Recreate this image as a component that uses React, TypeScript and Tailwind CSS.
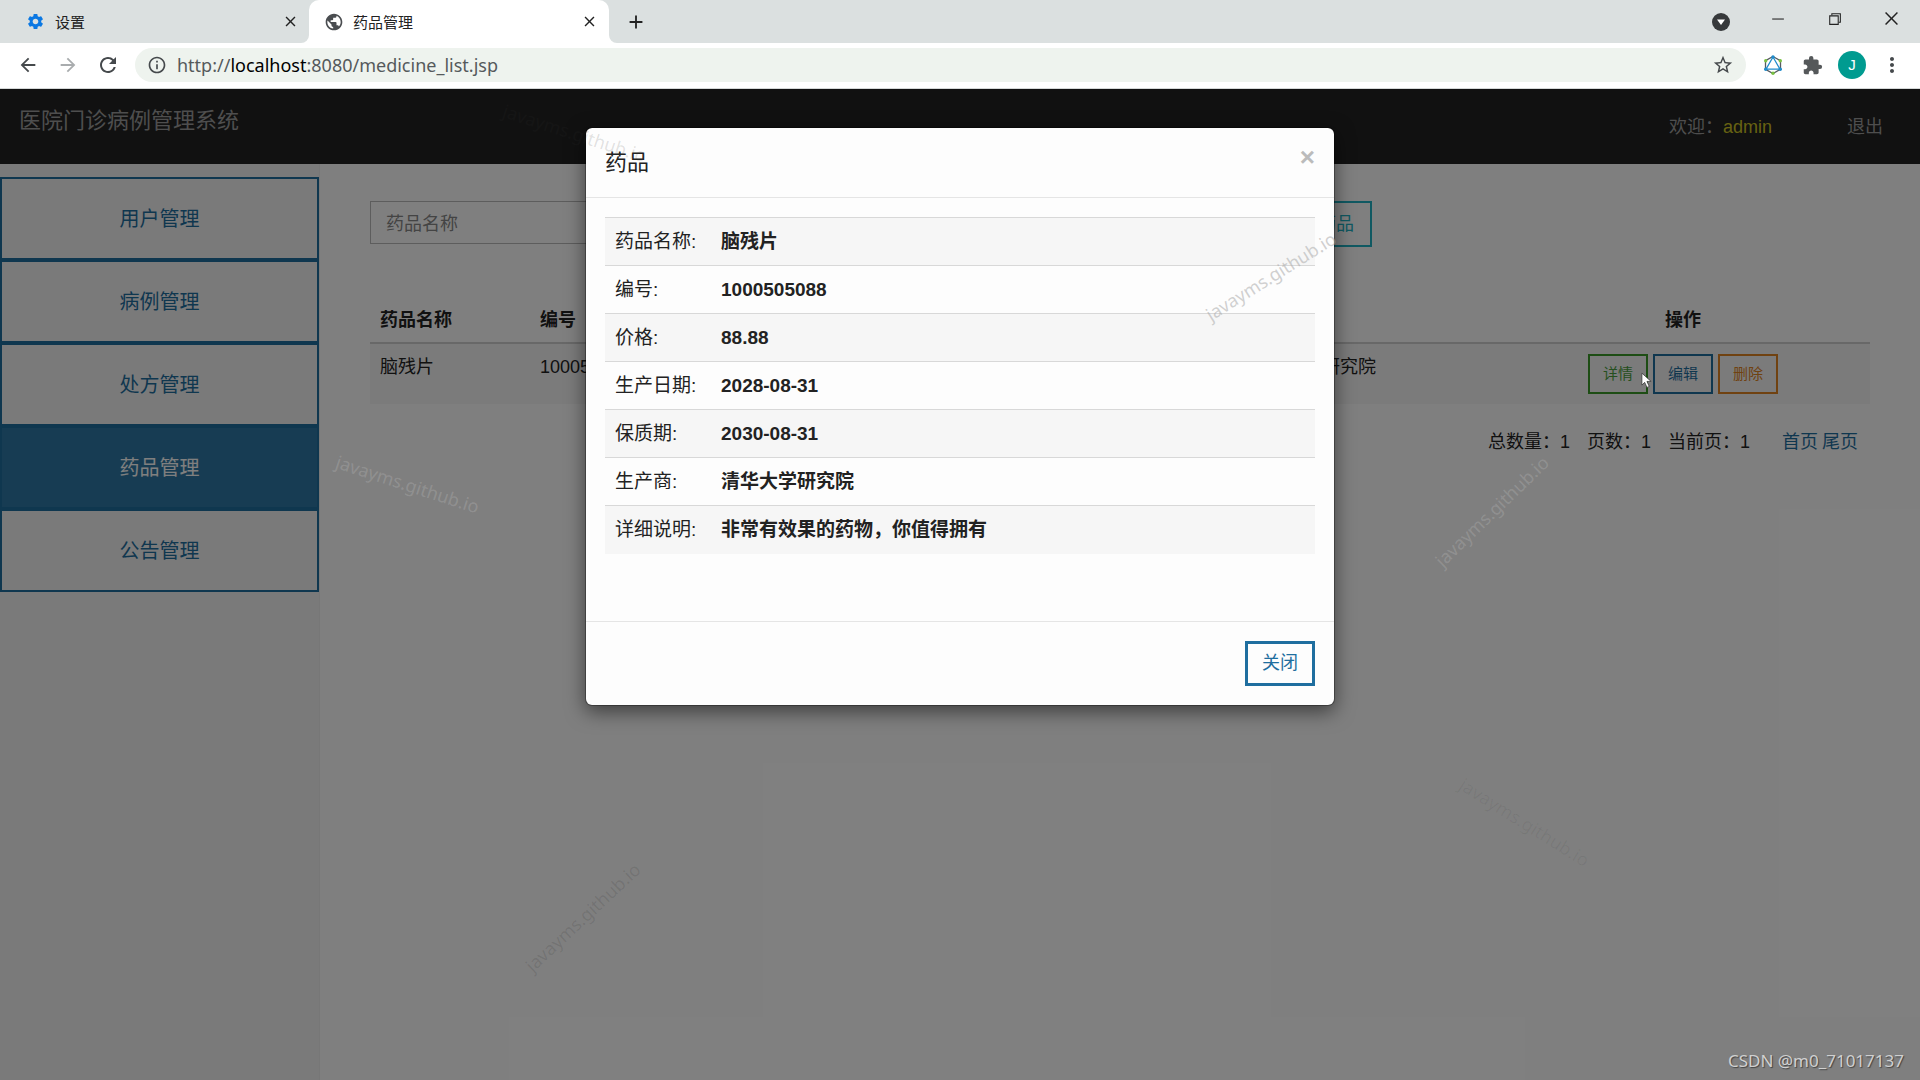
import {
    MdSettings, MdPublic, MdClose, MdAdd, MdArrowBack, MdArrowForward, MdRefresh,
    MdInfoOutline, MdStarBorder, MdExtension, MdMoreVert
} from "react-icons/md"
import { VscChromeMinimize, VscChromeRestore, VscChromeClose } from "react-icons/vsc"

const menu = ["用户管理", "病例管理", "处方管理", "药品管理", "公告管理"]

const details = [
    { label: "药品名称:", value: "脑残片" },
    { label: "编号:", value: "1000505088" },
    { label: "价格:", value: "88.88" },
    { label: "生产日期:", value: "2028-08-31" },
    { label: "保质期:", value: "2030-08-31" },
    { label: "生产商:", value: "清华大学研究院" },
    { label: "详细说明:", value: "非常有效果的药物，你值得拥有" },
]

const columns = [
    { title: "药品名称", width: "w-[160px]" },
    { title: "编号", width: "w-[180px]" },
    { title: "价格", width: "w-[150px]" },
    { title: "生产日期", width: "w-[190px]" },
    { title: "保质期", width: "w-[190px]" },
    { title: "生产商", width: "w-[256px]" },
]

const row = ["脑残片", "1000505088", "88.88", "2028-08-31", "2030-08-31", "清华大学研究院"]

const watermarks = [
    "left-[333px] top-[381px] rotate-[18deg] text-white/15",
    "left-[500px] top-[30px] rotate-[18deg] text-[#333333]/15",
    "left-[1196px] top-[173px] -rotate-[32deg] text-[#aaaaaa]/55",
    "left-[1417px] top-[408px] -rotate-[44deg] text-white/15",
    "left-[508px] top-[814px] -rotate-[43deg] text-black/10",
    "left-[1450px] top-[719px] rotate-[32deg] text-black/6",
]

function TabStrip() {
    return (
        <div className="flex h-[43px] items-end bg-white text-[15px] text-[#222222]">
            <div className="flex h-[43px] w-[309px] items-center rounded-br-[8px] bg-[#dbe0e0] pl-[26px] pr-[10px]">
                <MdSettings className="h-[19px] w-[19px] text-[#0b78e3]" />
                <span className="ml-[10px] flex-1 pt-[3px]">设置</span>
                <button type="button" aria-label="关闭标签页"><MdClose className="h-[17px] w-[17px]" /></button>
            </div>

            <div className="bg-[#dbe0e0]">
                <div className="flex h-[43px] w-[300px] items-center rounded-t-[10px] bg-white pl-[15px] pr-[11px]">
                    <MdPublic className="h-5 w-5 text-[#4a4d50]" />
                    <span className="ml-[9px] flex-1 pt-[3px]">药品管理</span>
                    <button type="button" aria-label="关闭标签页"><MdClose className="h-[17px] w-[17px]" /></button>
                </div>
            </div>

            <div className="flex h-[43px] flex-1 items-center rounded-bl-[8px] bg-[#dbe0e0]">
                <button type="button" aria-label="新标签页" className="flex w-[54px] justify-center">
                    <MdAdd className="h-[22px] w-[22px]" />
                </button>

                <button type="button" aria-label="搜索标签页" className="ml-auto flex w-[56px] justify-center">
                    <svg viewBox="0 0 18 18" className="h-[18px] w-[18px]">
                        <circle cx="9" cy="9" r="9" fill="#36393b" />
                        <path d="M5 6.5h8L9 12z" fill="#ffffff" />
                    </svg>
                </button>
                <button type="button" aria-label="最小化" className="flex w-[57px] justify-center pb-[7px]"><VscChromeMinimize className="h-[17px] w-[17px]" /></button>
                <button type="button" aria-label="还原" className="flex w-[57px] justify-center pb-[7px]"><VscChromeRestore className="h-[17px] w-[17px]" /></button>
                <button type="button" aria-label="关闭" className="flex w-[57px] justify-center pb-[7px]"><VscChromeClose className="h-[19px] w-[19px]" /></button>
            </div>
        </div>
    )
}

function Toolbar() {
    return (
        <div className="flex h-[46px] items-center border-b border-[#d5d8d8] bg-white pb-px pl-[17px] pr-[16px] text-[#45494c]">
            <button type="button" aria-label="后退"><MdArrowBack className="h-[22px] w-[22px]" /></button>
            <button type="button" aria-label="前进" className="ml-[18px]"><MdArrowForward className="h-[22px] w-[22px] text-[#a9acae]" /></button>
            <button type="button" aria-label="重新加载" className="ml-[17px]"><MdRefresh className="h-6 w-6" /></button>

            <div className="ml-[15px] mr-[14px] flex h-[34px] flex-1 items-center rounded-full bg-[#eef3ee] px-[12px]">
                <MdInfoOutline className="h-5 w-5 shrink-0" />
                <p className="ml-[10px] flex-1 font-['Noto_Sans'] text-[18px] leading-6 text-[#555a5c]">http://<span className="text-black">localhost</span>:8080/medicine_list.jsp</p>
                <button type="button" aria-label="收藏"><MdStarBorder className="h-[22px] w-[22px]" /></button>
            </div>

            <div className="flex items-center">
                <svg viewBox="0 0 20 20" className="mx-[3px] h-5 w-5">
                    <path d="M10 1.5l7.5 4.2v8.6L10 18.500l-7.500-4.200V5.700z" fill="none" stroke="#555b60" strokeWidth="1.300" />
                    <path d="M10 2L3 14.200h14z" fill="none" stroke="#1f8ccc" strokeWidth="1.300" />
                    <circle cx="10" cy="2" r="1.700" fill="#1f8ccc" />
                    <circle cx="2.700" cy="14.200" r="1.700" fill="#1f8ccc" />
                    <circle cx="17.300" cy="14.200" r="1.700" fill="#1f8ccc" />
                    <circle cx="2.700" cy="5.800" r="1.700" fill="#7ac143" />
                    <circle cx="17.300" cy="5.800" r="1.700" fill="#7ac143" />
                    <circle cx="10" cy="18.300" r="1.700" fill="#7ac143" />
                </svg>
                <button type="button" aria-label="扩展程序" className="ml-[16px]"><MdExtension className="h-[21px] w-[21px] text-[#55585a]" /></button>
                <button type="button" className="ml-[15px] h-7 w-7 rounded-full bg-[#009b90] text-[15px] leading-7 text-white">J</button>
                <button type="button" aria-label="更多" className="ml-[14px]"><MdMoreVert className="h-6 w-6" /></button>
            </div>
        </div>
    )
}

function Sidebar() {
    return (
        <aside className="w-[320px] shrink-0 border-r border-[#eeeeee] bg-[#f5f5f5] pt-[13px]">
            <nav className="flex flex-col">
                {menu.map((item) => (
                    <a
                        key={item}
                        href="#"
                        className={item === "药品管理"
                            ? "h-[83px] border-2 border-[#1f6e9f] bg-[#2f79a6] text-center text-[20px] leading-[81px] text-white"
                            : "h-[83px] border-2 border-[#1f6e9f] text-center text-[20px] leading-[81px] text-[#1f6e9f]"}
                    >
                        {item}
                    </a>
                ))}
            </nav>
        </aside>
    )
}

function MedicineList() {
    return (
        <main className="min-w-0 flex-1 px-[50px] pt-[37px]">
            <form className="flex h-[46px] items-start">
                <input type="text" aria-label="药品名称" placeholder="药品名称" className="h-[43px] w-[500px] border border-[#bbbbbb] px-[15px] pt-1 text-[18px] placeholder:text-[#888888]" />
                <button type="button" className="ml-[30px] h-[46px] w-[130px] border-2 border-[#1f6e9f] text-[18px] text-[#1f6e9f]">查询</button>
                <button type="button" className="ml-auto mr-[498px] h-[46px] border-2 border-[#20b2c4] px-[16px] text-[18px] text-[#20b2c4]">添加药品</button>
            </form>

            <table className="mt-[50px] w-full table-fixed text-left text-[18px] leading-[26px]">
                <thead>
                    <tr className="h-[46px] border-b-2 border-[#d0d0d0]">
                        {columns.map((column) => (
                            <th key={column.title} className={`${column.width} px-[10px]`}>{column.title}</th>
                        ))}
                        <th className="text-center">操作</th>
                    </tr>
                </thead>
                <tbody>
                    <tr className="bg-[#f7f7f7] align-top">
                        {row.map((cell, index) => (
                            <td key={index} className="px-[10px] pt-[10px]">{cell}</td>
                        ))}
                        <td className="py-[10px]">
                            <div className="flex justify-center gap-[5px] text-[15px]">
                                <button type="button" className="h-10 w-[60px] border-2 border-[#3b9b28] text-[#4b9f3f]">详情</button>
                                <button type="button" className="h-10 w-[60px] border-2 border-[#1f6e9f] text-[#1f6e9f]">编辑</button>
                                <button type="button" className="h-10 w-[60px] border-2 border-[#e08423] text-[#e08423]">删除</button>
                            </div>
                        </td>
                    </tr>
                </tbody>
            </table>

            <div className="mt-[25px] flex justify-end pr-[12px] text-[18px] leading-[26px]">
                <span>总数量：1</span>
                <span className="ml-[17px]">页数：1</span>
                <span className="ml-[17px]">当前页：1</span>
                <a href="#" className="ml-8 text-[#1f6e9f]">首页</a>
                <a href="#" className="ml-1 text-[#1f6e9f]">尾页</a>
            </div>
        </main>
    )
}

function DetailModal() {
    return (
        <div className="absolute inset-0 flex items-start justify-center bg-black/50 pt-[38px]">
            <div role="dialog" aria-labelledby="modal-title" className="w-[750px] rounded-[7px] border border-black/30 bg-[#fdfdfd] bg-clip-padding shadow-[0_6px_19px_rgba(0,0,0,0.5)]">
                <div className="flex items-start justify-between border-b border-[#e5e5e5] px-[19px] py-[19px]">
                    <h4 id="modal-title" className="text-[22px] leading-[31px]">药品</h4>
                    <button type="button" aria-label="关闭" className="text-[26px] font-bold leading-5 text-[#bbbbbb]">×</button>
                </div>

                <div className="px-[19px] pb-[67px] pt-[19px]">
                    <table className="w-full text-left text-[19px] leading-[27px]">
                        <tbody>
                            {details.map((item) => (
                                <tr key={item.label} className="h-12 border-t border-[#d8d8d8] odd:bg-[#f6f6f6]">
                                    <td className="w-[106px] px-[10px]">{item.label}</td>
                                    <th className="px-[10px]">{item.value}</th>
                                </tr>
                            ))}
                        </tbody>
                    </table>
                </div>

                <div className="flex justify-end border-t border-[#e5e5e5] p-[19px]">
                    <button type="button" className="h-[45px] w-[70px] border-3 border-[#1f6e9f] text-[18px] text-[#1f6e9f]">关闭</button>
                </div>
            </div>
        </div>
    )
}

export default function App() {
    return (
        <div className="flex min-h-screen flex-col font-['Liberation_Sans','Noto_Sans_CJK_SC',sans-serif] text-[#222222]">
            <TabStrip />
            <Toolbar />

            <div className="relative flex flex-1 flex-col overflow-hidden bg-white">
                <header className="flex h-[75px] items-center bg-[#222222] px-[19px] text-[#9d9d9d]">
                    <a href="#" className="pb-[12px] text-[22px] leading-[30px]">医院门诊病例管理系统</a>
                    <p className="ml-auto pt-0.5 text-[18px]">欢迎：<span className="text-[#cfc424]">admin</span></p>
                    <a href="#" className="ml-[75px] mr-[18px] pt-0.5 text-[18px]">退出</a>
                </header>

                <div className="flex flex-1">
                    <Sidebar />
                    <MedicineList />
                </div>

                <DetailModal />

                {watermarks.map((mark) => (
                    <span key={mark} className={`pointer-events-none absolute font-['Noto_Sans'] text-[18px] leading-[28px] ${mark}`}>javayms.github.io</span>
                ))}

                <svg viewBox="0 0 12 18" className="absolute left-[1641px] top-[283px] h-[17px] w-[11px]">
                    <path d="M1 1v13l3-3 2.500 5.500 2.500-1-2.500-5.500H11z" fill="#ffffff" stroke="#333333" strokeWidth="0.800" />
                </svg>

                <span className="absolute bottom-[6px] right-4 font-['Noto_Sans'] text-[17px] leading-[26px] text-[#d0d0d0] [text-shadow:1px_1px_1px_#444444]">CSDN @m0_71017137</span>
            </div>
        </div>
    )
}
